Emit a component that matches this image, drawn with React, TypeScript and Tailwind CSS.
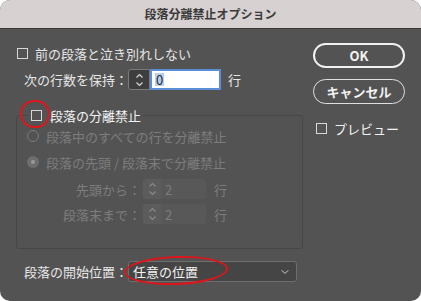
import { ChevronDown } from "lucide-react";

const font = { fontFamily: '"Noto Sans CJK JP", "Noto Sans", sans-serif' };

function Spinner({ dim }: { dim?: boolean }) {
  const c = dim ? "#8a8a8a" : "#d8d8d8";
  return (
    <div
      className={
        dim
          ? "flex h-full w-[18px] flex-col items-center justify-center rounded-l-[3px] bg-[#5c5c5c]"
          : "flex h-full w-[22px] flex-col items-center justify-center rounded-l-[3px] border border-[#7a7a7a] bg-[#3e3e3e]"
      }
    >
      <svg width="9" height="16" viewBox="0 0 9 16" fill="none" stroke={c} strokeWidth="1.2">
        <path d="M1.5 5.5 L4.5 2.5 L7.5 5.5" />
        <path d="M1.5 10.5 L4.5 13.5 L7.5 10.5" />
      </svg>
    </div>
  );
}

function Box() {
  return <span className="inline-block h-[11px] w-[11px] border border-[#d8d8d8] bg-transparent" />;
}

export default function App() {
  return (
    <div className="h-[301px] w-[421px] bg-white text-[13px] leading-none" style={font}>
      <div className="flex h-full w-full flex-col overflow-hidden rounded-[10px] bg-[#535353]">
        {/* Title bar */}
        <div className="flex h-[29px] shrink-0 items-center justify-center border-b border-[#3a3a3a] bg-[#d7d1d1] text-[12px] font-bold text-[#3a3a3a]">
          段落分離禁止オプション
        </div>

        <div className="relative flex flex-1">
          {/* Left column */}
          <div className="flex w-[304px] flex-col pl-[16px] text-[#e6e6e6]">
            <div className="mt-[16px] flex h-[16px] items-center gap-[7px] pl-[1px]">
              <Box />
              <span>前の段落と泣き別れしない</span>
            </div>

            <div className="mt-[8px] flex h-[21px] items-center pl-[8px]">
              <span className="w-[104px]">次の行数を保持：</span>
              <Spinner />
              <div className="flex h-full w-[71px] items-center border-2 border-[#5b8ed6] bg-white pl-[3px] text-[13px] text-[#2a2a2a]">
                <span className="bg-[#b5cff0] px-px">0</span>
              </div>
              <span className="ml-[7px]">行</span>
            </div>

            <fieldset className="mt-[19px] h-[140px] w-[287px] rounded-[3px] border border-[#474747] px-0 pb-0">
              <legend className="ml-[12px] flex items-center gap-[8px] px-[2px] text-[#f2f2f2]">
                <Box />
                <span>段落の分離禁止</span>
              </legend>

              <div className="flex flex-col pl-[10px] text-[#7d7d7d]">
                <div className="mt-[6px] flex h-[16px] items-center gap-[7px]">
                  <span className="inline-block h-[12px] w-[12px] rounded-full border border-[#7d7d7d]" />
                  <span>段落中のすべての行を分離禁止</span>
                </div>
                <div className="mt-[10px] flex h-[16px] items-center gap-[7px]">
                  <span className="flex h-[12px] w-[12px] items-center justify-center rounded-full bg-[#6e6e6e]">
                    <span className="h-[4px] w-[4px] rounded-full bg-[#9a9a9a]" />
                  </span>
                  <span>段落の先頭 / 段落末で分離禁止</span>
                </div>

                <div className="mt-[9px] flex h-[20px] items-center">
                  <span className="w-[116px] pr-[2px] text-right">先頭から：</span>
                  <Spinner dim />
                  <div className="flex h-full w-[45px] items-center rounded-r-[3px] bg-[#585858] pl-[4px]">2</div>
                  <span className="ml-[8px]">行</span>
                </div>
                <div className="mt-[5px] flex h-[20px] items-center">
                  <span className="w-[116px] pr-[2px] text-right">段落末まで：</span>
                  <Spinner dim />
                  <div className="flex h-full w-[45px] items-center rounded-r-[3px] bg-[#585858] pl-[4px]">2</div>
                  <span className="ml-[8px]">行</span>
                </div>
              </div>
            </fieldset>

            <div className="mt-[12px] flex h-[21px] items-center pl-[8px]">
              <span className="w-[104px]">段落の開始位置：</span>
              <div className="flex h-full w-[169px] items-center justify-between rounded-[3px] border border-[#6e6e6e] bg-[#454545] pl-[4px] pr-[5px] text-[#f2f2f2]">
                <span>任意の位置</span>
                <ChevronDown className="h-[12px] w-[12px] text-[#cfcfcf]" strokeWidth={2} />
              </div>
            </div>
          </div>

          {/* Right column */}
          <div className="flex flex-col pl-[9px] text-[#f2f2f2]">
            <button className="mt-[14px] flex h-[25px] w-[92px] items-center justify-center rounded-full border-2 border-[#f2f2f2] text-[13px] font-bold">
              OK
            </button>
            <button className="mt-[11px] flex h-[25px] w-[92px] items-center justify-center rounded-full border border-[#e0e0e0] text-[13px] font-bold">
              キャンセル
            </button>
            <div className="mt-[18px] flex items-center gap-[7px] pl-[3px]">
              <Box />
              <span>プレビュー</span>
            </div>
          </div>

          {/* Annotations */}
          <span className="pointer-events-none absolute left-[20px] top-[71px] h-[28px] w-[30px] rounded-full border-2 border-[#e0141b]" />
          <span className="pointer-events-none absolute left-[124px] top-[227px] h-[29px] w-[104px] -rotate-2 rounded-[50%] border-2 border-[#e0141b]" />
        </div>
      </div>
    </div>
  );
}
